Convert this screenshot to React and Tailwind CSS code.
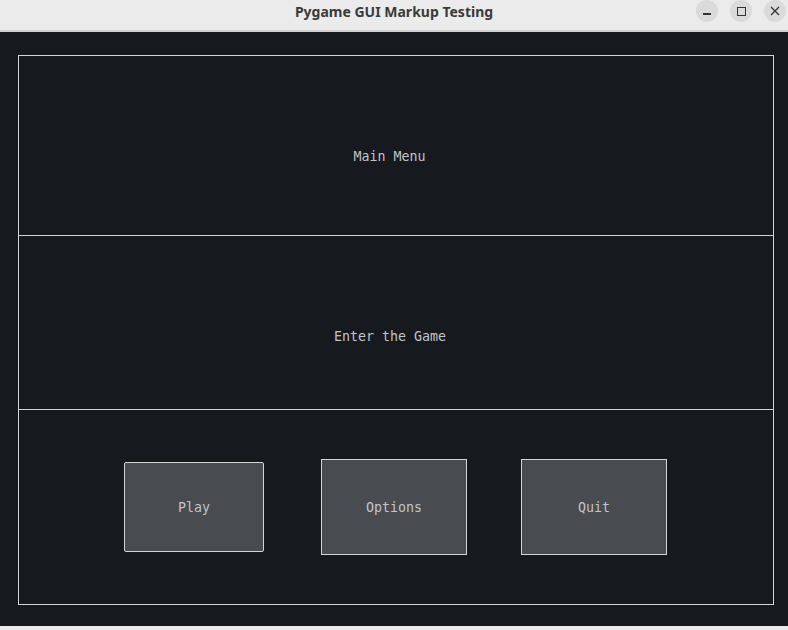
import React from "react";

const mono = { fontFamily: '"DejaVu Sans Mono", "Liberation Mono", monospace' };

const MenuButton = ({ label, className }) => (
  <div
    className={`flex items-center justify-center pt-[1px] bg-[#484b4f] border border-[#d4d4d4] text-[13.3px] text-[#c0c4c9] ${className}`}
    style={mono}
  >
    {label}
  </div>
);

const WindowButton = ({ children }) => (
  <div className="w-[22px] h-[22px] rounded-full bg-[#dadada] flex items-center justify-center">
    {children}
  </div>
);

const App = () => {
  return (
    <div className="w-[788px] h-[630px] flex flex-col bg-[#ebebeb] overflow-hidden">
      {/* Title bar */}
      <div className="relative h-[32px] shrink-0 flex items-center justify-center border-b-2 border-[#d2d2d2] bg-[#ebebeb]">
        <span
          className="text-[14px] font-bold text-[#3a3a3a] -mt-[7px]"
          style={{ fontFamily: '"Noto Sans", "Liberation Sans", sans-serif' }}
        >
          Pygame GUI Markup Testing
        </span>
        <div className="absolute right-[2px] top-0 flex gap-[12px]">
          <WindowButton>
            <div className="w-[8px] h-[1.5px] bg-[#333] mt-[6px]" />
          </WindowButton>
          <WindowButton>
            <div className="w-[9px] h-[9px] border border-[#333]" />
          </WindowButton>
          <WindowButton>
            <svg width="10" height="10" viewBox="0 0 10 10">
              <path d="M1 1L9 9M9 1L1 9" stroke="#333" strokeWidth="1.3" />
            </svg>
          </WindowButton>
        </div>
      </div>

      {/* Game surface */}
      <div className="h-[594px] shrink-0 bg-[#16191e] pt-[23px] pl-[18px] pr-[14px]">
        <div className="h-[550px] border border-[#d4d4d4] flex flex-col">
          <div
            className="h-[179px] flex items-center justify-center pt-[23px] pr-[13px] text-[13.3px] text-[#c0c4c9]"
            style={mono}
          >
            Main Menu
          </div>
          <div
            className="h-[174px] border-t border-[#d4d4d4] flex items-center justify-center pt-[28px] pr-[12px] text-[13.3px] text-[#c0c4c9]"
            style={mono}
          >
            Enter the Game
          </div>
          <div className="flex-1 border-t border-[#d4d4d4] flex items-center pl-[105px]">
            <MenuButton label="Play" className="w-[140px] h-[90px] rounded-[2px]" />
            <MenuButton label="Options" className="w-[146px] h-[96px] ml-[57px]" />
            <MenuButton label="Quit" className="w-[146px] h-[96px] ml-[54px]" />
          </div>
        </div>
      </div>
    </div>
  );
};

export default App;
